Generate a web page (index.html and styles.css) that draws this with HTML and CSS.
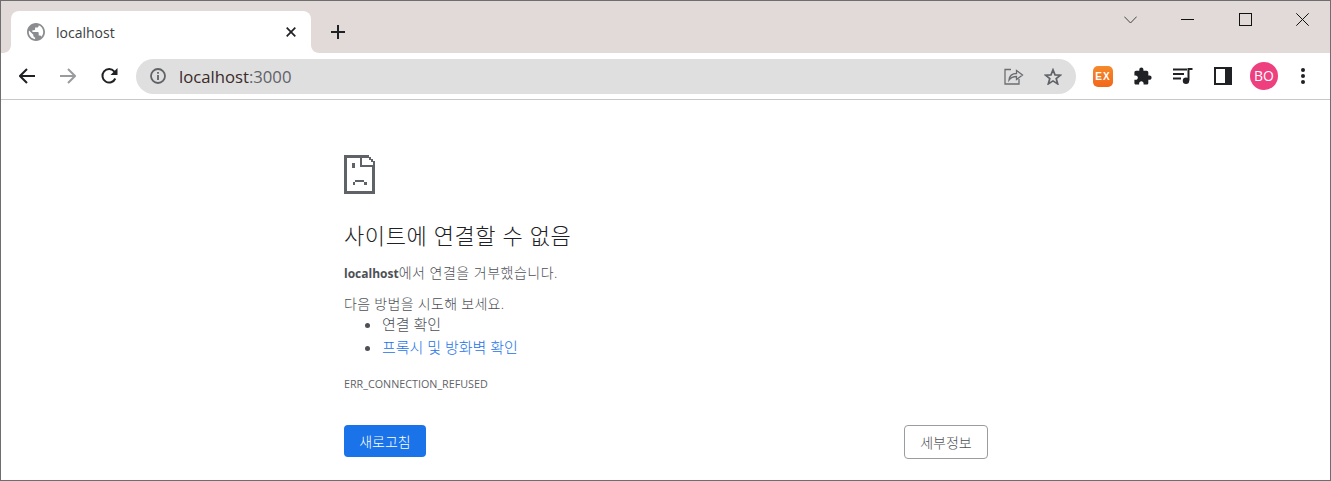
FILE: index.html
```html
<!DOCTYPE html>
<html lang="ko">
<head>
<meta charset="utf-8">
<title>localhost</title>
<link rel="stylesheet" href="styles.css">
</head>
<body>
<div class="window">
  <header class="tabstrip">
    <div class="tab">
      <svg class="tab-corner tab-corner-l" width="8" height="8" viewBox="0 0 8 8"><path d="M8 0V8H0C4.4 8 8 4.4 8 0Z" fill="#fff"/></svg>
      <svg class="favicon" width="18" height="18" viewBox="2 2 20 20"><path fill="#8a8c8f" d="M12 2C6.480 2 2 6.480 2 12s4.480 10 10 10 10-4.480 10-10S17.520 2 12 2zm-1 17.930c-3.950-.49-7-3.850-7-7.930 0-.62.08-1.210.21-1.790L9 15v1c0 1.100.9 2 2 2v1.930zm6.900-2.540c-.26-.81-1-1.390-1.900-1.390h-1v-3c0-.55-.45-1-1-1H8v-2h2c.55 0 1-.45 1-1V7h2c1.100 0 2-.9 2-2v-.41c2.930 1.190 5 4.060 5 7.410 0 2.080-.8 3.970-2.100 5.390z"/></svg>
      <span class="tab-title">localhost</span>
      <svg class="tab-close" width="10" height="10" viewBox="0 0 10 10"><path d="M.7.700 9.300 9.300M9.300.700.7 9.300" stroke="#202124" stroke-width="1.700"/></svg>
      <svg class="tab-corner tab-corner-r" width="8" height="8" viewBox="0 0 8 8"><path d="M0 0V8H8C3.600 8 0 4.400 0 0Z" fill="#fff"/></svg>
    </div>
    <svg class="new-tab" width="14" height="14" viewBox="0 0 14 14"><path d="M7 0V14M0 7H14" stroke="#202124" stroke-width="2"/></svg>
    <div class="window-controls">
      <svg class="win-btn" width="13" height="8" viewBox="0 0 13 8"><path d="M.3.600 6.500 7 12.700.6" fill="none" stroke="#444" stroke-width="1"/></svg>
      <svg class="win-btn" width="13" height="1" viewBox="0 0 13 1"><path d="M0 .5H13" stroke="#111" stroke-width="1"/></svg>
      <svg class="win-btn" width="13" height="13" viewBox="0 0 13 13"><rect x=".5" y=".5" width="12" height="12" fill="none" stroke="#111"/></svg>
      <svg class="win-btn" width="13" height="13" viewBox="0 0 13 13"><path d="M.3.300 12.700 12.700M12.700.300.3 12.700" stroke="#111" stroke-width="1"/></svg>
    </div>
  </header>
  <nav class="toolbar">
    <svg class="nav-icon" width="16" height="16" viewBox="0 0 16 16"><path d="M16 8H1.500M8 1 1 8l7 7" fill="none" stroke="#202124" stroke-width="2"/></svg>
    <svg class="nav-icon" width="16" height="16" viewBox="0 0 16 16"><path d="M0 8H14.500M8 1l7 7-7 7" fill="none" stroke="#9a9b9d" stroke-width="2"/></svg>
    <svg class="nav-icon" width="17" height="17" viewBox="0 0 17 17"><path d="M14.300 10.500A6.700 6.700 0 1 1 13.200 3.400L15.200 5.400" fill="none" stroke="#202124" stroke-width="2"/><path d="M16.500 0V7H9.500Z" fill="#202124"/></svg>
    <div class="omnibox">
      <svg class="info-icon" width="16" height="16" viewBox="0 0 16 16"><circle cx="8" cy="8" r="7" fill="none" stroke="#5f6368" stroke-width="1.800"/><path d="M8 7V12M8 4V5.800" stroke="#5f6368" stroke-width="1.800"/></svg>
      <div class="url"><span class="host">localhost</span><span class="port">:3000</span></div>
      <svg class="omni-icon" width="20" height="18" viewBox="0 0 20 18"><path d="M7 2.500H1V17H15V12" fill="none" stroke="#6b6d70" stroke-width="1.300"/><path d="M5 13C5.500 9 8.500 6.500 12.500 6.500V3.500L18.500 8 12.500 12.500V9.500C9.500 9.500 7 10.500 5 13Z" fill="none" stroke="#6b6d70" stroke-width="1.300"/></svg>
      <svg class="omni-icon" width="18" height="17" viewBox="0 0 18 17"><path d="M9 1.800 11 6.900 16.500 7.200 12.200 10.600 13.700 15.900 9 12.900 4.300 15.900 5.800 10.600 1.500 7.200 7 6.900Z" fill="none" stroke="#5f6368" stroke-width="1.700"/></svg>
    </div>
    <div class="ext-icons">
      <div class="ext-badge">EX</div>
      <svg width="18" height="18" viewBox="1.500 .5 22 22"><path fill="#202124" d="M20.500 11H19V7c0-1.100-.9-2-2-2h-4V3.500C13 2.120 11.880 1 10.500 1S8 2.120 8 3.500V5H4c-1.100 0-1.990.9-1.990 2v3.800H3.500c1.490 0 2.700 1.210 2.700 2.700s-1.210 2.700-2.700 2.700H2V20c0 1.100.9 2 2 2h3.800v-1.500c0-1.490 1.210-2.700 2.700-2.700 1.490 0 2.700 1.210 2.700 2.700V22H17c1.100 0 2-.9 2-2v-4h1.500c1.380 0 2.500-1.120 2.500-2.500S21.880 11 20.500 11z"/></svg>
      <svg width="20" height="16" viewBox="0 0 20 16"><path d="M0 1.500H14M0 6H11M0 10.500H8" stroke="#202124" stroke-width="2"/><path d="M15.500 12.500V1H19.500" fill="none" stroke="#202124" stroke-width="2"/><circle cx="13" cy="12.700" r="3.200" fill="#202124"/></svg>
      <svg width="18" height="18" viewBox="0 0 18 18"><rect width="18" height="18" fill="#202124"/><rect x="2" y="2" width="9" height="14" fill="#fff"/></svg>
      <div class="avatar">BO</div>
      <svg class="menu" width="4" height="16" viewBox="0 0 4 16"><circle cx="2" cy="2" r="2" fill="#202124"/><circle cx="2" cy="8" r="2" fill="#202124"/><circle cx="2" cy="14" r="2" fill="#202124"/></svg>
    </div>
  </nav>
  <main class="page">
    <div class="error">
      <svg class="sad-icon" width="31" height="39" viewBox="0 0 31 39" shape-rendering="crispEdges"><path d="M0 0H23V3H3V36H28V12H31V39H0Z" fill="#5f6368"/><path d="M16 0H18V10H31V12H16ZM23 0H25V2H27V4H29V6H31V10H29V7H27V5H25V3H23Z" fill="#5f6368"/><path d="M8 8H11V13H8ZM11 25H20V27H23V30H20V27H11V30H9V27H11Z" fill="#5f6368"/></svg>
      <h1 class="error-title">사이트에 연결할 수 없음</h1>
      <p class="msg"><strong class="msg-host">localhost</strong>에서 연결을 거부했습니다.</p>
      <p class="try">다음 방법을 시도해 보세요.</p>
      <ul class="suggest">
        <li>연결 확인</li>
        <li><a class="link" href="#">프록시 및 방화벽 확인</a></li>
      </ul>
      <div class="code">ERR_CONNECTION_REFUSED</div>
      <div class="actions">
        <button class="btn btn-primary">새로고침</button>
        <button class="btn btn-secondary">세부정보</button>
      </div>
    </div>
  </main>
</div>
</body>
</html>
```
FILE: styles.css
```css
* { box-sizing: border-box; }
html, body { margin: 0; padding: 0; height: 100%; }
body { background: #fff; font-family: "Open Sans", "Noto Sans CJK KR", sans-serif; overflow: hidden; }
.window { height: 481px; border: 1px solid #6e6e6e; display: flex; flex-direction: column; }
.tabstrip { height: 52px; flex: none; background: #e2dad8; display: flex; align-items: flex-end; padding-left: 10px; }
.tab { position: relative; width: 300px; height: 42px; background: #fff; border-radius: 8px 8px 0 0; display: flex; align-items: center; padding: 0 15px 0 16px; }
.tab-corner { position: absolute; bottom: 0; }
.tab-corner-l { left: -8px; }
.tab-corner-r { right: -8px; }
.favicon { flex: none; }
.tab-title { flex: 1; margin-left: 11px; font-size: 14px; color: #3c4043; }
.tab-close { flex: none; }
.new-tab { flex: none; margin: 0 0 14px 20px; }
.window-controls { margin-left: auto; align-self: flex-start; height: 37px; display: flex; align-items: center; gap: 44.330px; padding-right: 21px; }
.toolbar { height: 47px; flex: none; border-bottom: 1px solid #c8c8c8; display: flex; align-items: center; padding-left: 18px; background: #fff; }
.nav-icon { flex: none; margin-right: 25px; }
.nav-icon:nth-child(3) { margin-right: 18px; }
.omnibox { width: 940px; height: 35px; border-radius: 18px; background: #dfdfdf; display: flex; align-items: center; padding: 0 14px; }
.info-icon { flex: none; }
.url { flex: 1; margin-left: 13px; font-size: 16.700px; }
.host { color: #3a2a2a; }
.port { color: #5f6368; }
.omni-icon { flex: none; margin-left: 20px; }
.ext-icons { display: flex; align-items: center; margin-left: 17px; gap: 21px; }
.ext-badge { width: 20px; height: 21px; border-radius: 5px; background: linear-gradient(#f58a2c, #f2661b); color: #fff; font: 700 10px/21px "Liberation Sans", sans-serif; text-align: center; letter-spacing: 1px; }
.avatar { width: 28px; height: 28px; border-radius: 50%; background: #ee3f7e; color: #fff; font-size: 14px; line-height: 28px; text-align: center; margin-left: -3px; }
.menu { margin-left: 2px; }
.page { flex: 1; padding: 55px 0 0 343px; }
.error { width: 644px; color: #4d5055; font-size: 14px; font-weight: 300; }
.sad-icon { display: block; }
.error-title { margin: 26px 0 0; font-size: 22px; font-weight: 300; line-height: 30px; letter-spacing: .6px; color: #202124; }
.msg { margin: 14px 0 0; line-height: 18px; letter-spacing: .5px; }
.msg-host { font-size: 12px; font-weight: 700; letter-spacing: 0; }
.try { margin: 12px 0 0; line-height: 18px; letter-spacing: .3px; }
.suggest { margin: 0; padding: 0 0 0 38px; font-size: 15px; }
.suggest li { line-height: 23px; }
.link { color: #1a73e8; text-decoration: none; }
.code { margin-top: 18px; font-size: 10.750px; line-height: 14px; font-weight: 400; color: #5f6368; }
.actions { display: flex; justify-content: space-between; align-items: flex-start; margin-top: 34px; }
.btn { height: 32px; border-radius: 4px; font-family: inherit; font-size: 14px; font-weight: 300; padding: 0; }
.btn-primary { width: 82px; background: #1a73e8; border: 0; color: #fff; }
.btn-secondary { width: 84px; height: 34px; background: #fff; border: 1px solid #9a9ca0; color: #4d5055; }
```
